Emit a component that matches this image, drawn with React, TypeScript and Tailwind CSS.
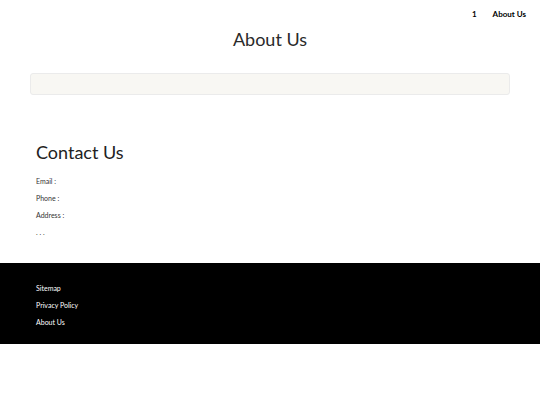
export default function App() {
  return (
    <div className="min-h-[405px] bg-white font-['Lato',sans-serif] text-[#222]">
      <nav className="flex justify-end gap-4 pr-[14px] pt-[8px] text-[8px] font-bold text-black">
        <span>1</span>
        <span>About Us</span>
      </nav>
      <h1 className="mt-[7px] text-center text-[18px] leading-[24px] text-[#2a2a2a]">About Us</h1>
      <div className="mx-[30px] mt-[22px] h-[22px] rounded-[3px] border border-[#ebebeb] bg-[#f8f7f3]" />
      <section className="px-[36px] pt-[45px] pb-[25px]">
        <h2 className="text-[18px] leading-[24px] text-[#222]">Contact Us</h2>
        <div className="mt-[12px] flex flex-col gap-[6px] text-[7px] leading-[11px] text-[#333]">
          <span>Email :</span>
          <span>Phone :</span>
          <span>Address :</span>
          <span>. . .</span>
        </div>
      </section>
      <footer className="flex flex-col gap-[6px] bg-black px-[36px] pt-[20px] pb-[16px] text-[7px] leading-[11px] text-white">
        <span>Sitemap</span>
        <span>Privacy Policy</span>
        <span>About Us</span>
      </footer>
    </div>
  )
}
